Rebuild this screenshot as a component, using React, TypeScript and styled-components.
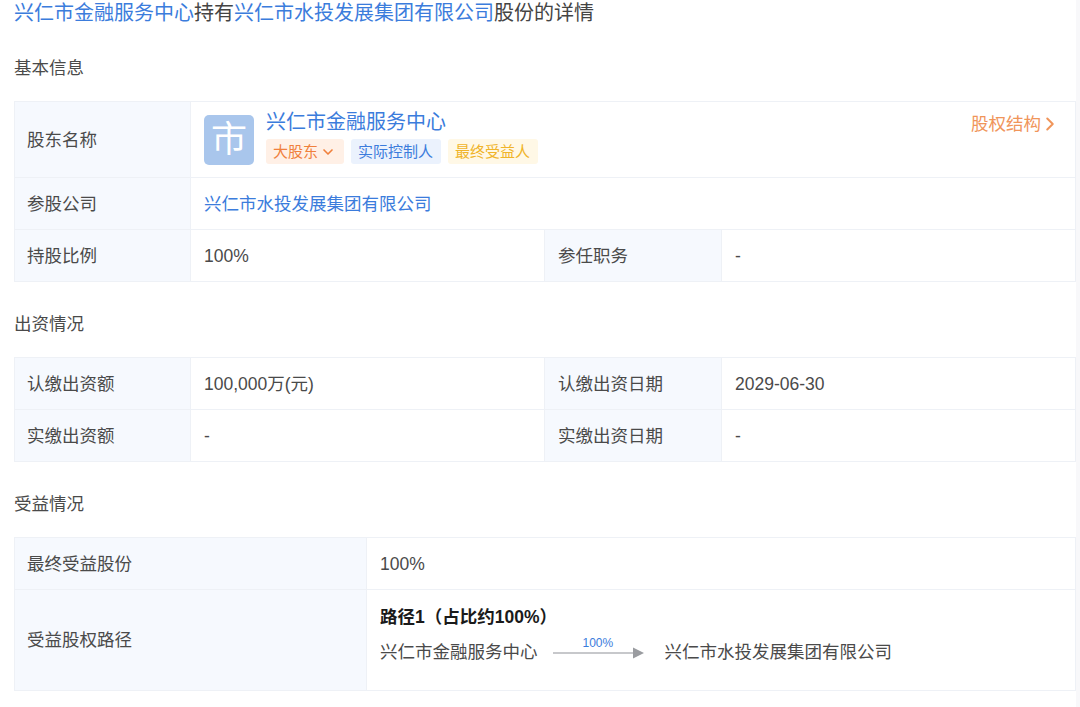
import React from "react";
import styled, { createGlobalStyle } from "styled-components";
import { ChevronDown, ChevronRight } from "lucide-react";

const FONT = `"Liberation Sans", "Noto Sans CJK SC", sans-serif`;
const BORDER = "#eef1f6";

const GlobalStyle = createGlobalStyle`
  html, body {
    margin: 0;
    padding: 0;
    background: #fff;
    font-family: ${FONT};
    color: #333;
  }
`;

const Page = styled.div`
  width: 1080px;
  height: 707px;
  overflow: hidden;
  box-sizing: border-box;
  padding-left: 14px;
  border-right: 4px solid #f8f8fa;
`;

const Title = styled.div`
  font-size: 20px;
  line-height: 24px;
  padding-top: 1px;
  white-space: nowrap;
  color: #444;
`;

const Link = styled.span`
  color: #3b7cdc;
`;

const SectionTitle = styled.div<{ $top: number; $bottom: number }>`
  font-size: 17.5px;
  line-height: 24px;
  color: #4a4a4a;
  margin-top: ${(p) => p.$top}px;
  margin-bottom: ${(p) => p.$bottom}px;
`;

const Table = styled.div`
  border: 1px solid ${BORDER};
  border-bottom: 0;
  width: 1062px;
  box-sizing: border-box;
`;

const Row = styled.div<{ $h: number }>`
  display: flex;
  box-sizing: border-box;
  height: ${(p) => p.$h}px;
  border-bottom: 1px solid ${BORDER};
`;

const Label = styled.div<{ $w: number; $pad?: number }>`
  width: ${(p) => p.$w}px;
  flex: none;
  box-sizing: border-box;
  display: flex;
  align-items: center;
  padding-left: ${(p) => p.$pad ?? 12}px;
  background: #f6f9fe;
  border-right: 1px solid ${BORDER};
  font-size: 17.5px;
  line-height: 24px;
  color: #4a4a4a;
`;

const Value = styled.div<{ $w?: number }>`
  ${(p) => (p.$w ? `width: ${p.$w}px; flex: none;` : "flex: 1;")}
  box-sizing: border-box;
  display: flex;
  align-items: center;
  padding-left: 13px;
  border-right: ${(p) => (p.$w ? `1px solid ${BORDER}` : "0")};
  font-size: 17.5px;
  line-height: 24px;
  color: #4a4a4a;
`;

const HolderCell = styled(Value)`
  position: relative;
  gap: 12px;
`;

const Avatar = styled.div`
  width: 50px;
  height: 50px;
  border-radius: 5px;
  background: #a9c6ec;
  color: #fff;
  font-size: 36px;
  display: flex;
  align-items: center;
  justify-content: center;
  flex: none;
`;

const HolderInfo = styled.div`
  align-self: flex-start;
  display: flex;
  flex-direction: column;
  gap: 4px;
  padding-top: 7px;
`;

const HolderName = styled(Link)`
  font-size: 20px;
  line-height: 26px;
`;

const Tags = styled.div`
  display: flex;
  gap: 7px;
`;

const Tag = styled.span<{ $bg: string; $fg: string }>`
  display: inline-flex;
  align-items: center;
  box-sizing: border-box;
  height: 25px;
  padding: 1px 8px 0 7px;
  border-radius: 3px;
  font-size: 15px;
  background: ${(p) => p.$bg};
  color: ${(p) => p.$fg};

  svg {
    margin-left: 2px;
  }
`;

const StructureLink = styled.div`
  position: absolute;
  top: 10px;
  right: 14px;
  display: flex;
  align-items: center;
  font-size: 17.5px;
  color: #f0955a;

  svg {
    margin-left: -2px;
  }
`;

const PathCell = styled(Value)`
  flex-direction: column;
  align-items: flex-start;
  justify-content: flex-start;
  padding-top: 15px;
`;

const PathTitle = styled.div`
  font-size: 17.5px;
  font-weight: 700;
  color: #1a1a1a;
  line-height: 24px;
`;

const PathRow = styled.div`
  display: flex;
  align-items: center;
  margin-top: 11px;
`;

const Arrow = styled.div`
  position: relative;
  width: 92px;
  height: 24px;
  margin: 0 20px 0 15px;
  flex: none;
`;

const ArrowLabel = styled.span`
  position: absolute;
  top: -4px;
  left: 30px;
  font-size: 12px;
  line-height: 14px;
  color: #3b7cdc;
`;

const ArrowSvg = styled.svg`
  position: absolute;
  left: 0;
  top: 7px;
`;

export default function App() {
  return (
    <>
      <GlobalStyle />
      <Page>
        <Title>
          <Link>兴仁市金融服务中心</Link>持有<Link>兴仁市水投发展集团有限公司</Link>股份的详情
        </Title>

        <SectionTitle $top={31} $bottom={21}>基本信息</SectionTitle>
        <Table>
          <Row $h={76}>
            <Label $w={176}>股东名称</Label>
            <HolderCell>
              <Avatar>市</Avatar>
              <HolderInfo>
                <HolderName>兴仁市金融服务中心</HolderName>
                <Tags>
                  <Tag $bg="#fff0e6" $fg="#f0803c">
                    大股东
                    <ChevronDown size={16} strokeWidth={2.5} />
                  </Tag>
                  <Tag $bg="#ebf2fd" $fg="#3b7cdc">实际控制人</Tag>
                  <Tag $bg="#fff8e6" $fg="#f0b429">最终受益人</Tag>
                </Tags>
              </HolderInfo>
              <StructureLink>
                股权结构
                <ChevronRight size={22} strokeWidth={2.2} />
              </StructureLink>
            </HolderCell>
          </Row>
          <Row $h={52}>
            <Label $w={176}>参股公司</Label>
            <Value>
              <Link>兴仁市水投发展集团有限公司</Link>
            </Value>
          </Row>
          <Row $h={52}>
            <Label $w={176}>持股比例</Label>
            <Value $w={354}>100%</Value>
            <Label $w={177} $pad={13}>参任职务</Label>
            <Value>-</Value>
          </Row>
        </Table>

        <SectionTitle $top={30} $bottom={21}>出资情况</SectionTitle>
        <Table>
          <Row $h={52}>
            <Label $w={176}>认缴出资额</Label>
            <Value $w={354}>100,000万(元)</Value>
            <Label $w={177} $pad={13}>认缴出资日期</Label>
            <Value>2029-06-30</Value>
          </Row>
          <Row $h={52}>
            <Label $w={176}>实缴出资额</Label>
            <Value $w={354}>-</Value>
            <Label $w={177} $pad={13}>实缴出资日期</Label>
            <Value>-</Value>
          </Row>
        </Table>

        <SectionTitle $top={30} $bottom={21}>受益情况</SectionTitle>
        <Table>
          <Row $h={52}>
            <Label $w={352}>最终受益股份</Label>
            <Value>100%</Value>
          </Row>
          <Row $h={101}>
            <Label $w={352}>受益股权路径</Label>
            <PathCell>
              <PathTitle>路径1（占比约100%）</PathTitle>
              <PathRow>
                兴仁市金融服务中心
                <Arrow>
                  <ArrowLabel>100%</ArrowLabel>
                  <ArrowSvg width="92" height="12" viewBox="0 0 92 12">
                    <line x1="0" y1="6" x2="81" y2="6" stroke="#b4b6ba" strokeWidth="1.5" />
                    <polygon points="80,0.5 91,6 80,11.5" fill="#9a9ca0" />
                  </ArrowSvg>
                </Arrow>
                兴仁市水投发展集团有限公司
              </PathRow>
            </PathCell>
          </Row>
        </Table>
      </Page>
    </>
  );
}
